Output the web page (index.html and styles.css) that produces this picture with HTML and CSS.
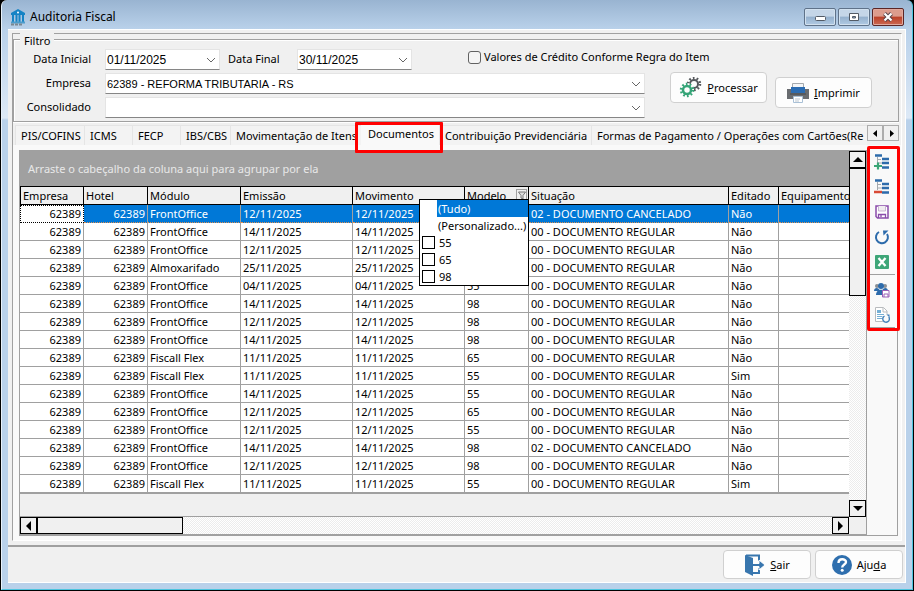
FILE: index.html
```html
<!DOCTYPE html>
<html lang="pt-BR">
<head>
    <meta charset="UTF-8">
    <meta name="viewport" content="width=device-width, initial-scale=1.0">
    <title>Auditoria Fiscal</title>
    <link rel="stylesheet" href="styles.css">
</head>
<body>
    <div class="window">
        <header class="titlebar">
            <svg class="app-icon" width="16" height="17" viewBox="0 0 16 17">
                <path d="M8 0L15 4v2H1V4z" fill="#1583c5"/>
                <path d="M3 6v7M6.500 6v7M9.500 6v7M13 6v7" stroke="#1583c5" stroke-width="2"/>
                <circle cx="8" cy="3.500" r="1" fill="#fff"/>
                <path d="M1 12.500h14v2H1z" fill="#4d9ccb"/>
                <path d="M1 15.500h12" stroke="#7b8791" stroke-width="2" stroke-dasharray="3 1"/>
            </svg>
            <h1>Auditoria Fiscal</h1>
            <div class="window-buttons">
                <button class="win-btn" aria-label="Minimizar">
                    <svg width="12" height="12" viewBox="0 0 12 12"><rect x="1.500" y="5.500" width="10" height="4" rx="1" fill="#fff" stroke="#535b66"/></svg>
                </button>
                <button class="win-btn" aria-label="Maximizar">
                    <svg width="12" height="12" viewBox="0 0 12 12"><path d="M1.500 2.500h9v7h-9z" fill="#fff" stroke="#535b66"/><path d="M4.500 5.500h3v1.500h-3z" fill="#8fb0d2" stroke="#535b66"/></svg>
                </button>
                <button class="win-btn close" aria-label="Fechar">
                    <svg width="12" height="12" viewBox="0 0 12 12"><path d="M2.500 2.500l7 7M9.500 2.500l-7 7" stroke="#54434a" stroke-width="4"/><path d="M2.500 2.500l7 7M9.500 2.500l-7 7" stroke="#fff" stroke-width="2.200"/></svg>
                </button>
            </div>
        </header>

        <main class="client">
            <div class="panel">
                <fieldset class="filter">
                    <legend>Filtro</legend>
                    <div class="fields">
                        <label for="data-inicial">Data Inicial</label>
                        <div class="dates">
                            <select id="data-inicial" class="combo date"><option>01/11/2025</option></select>
                            <label for="data-final">Data Final</label>
                            <select id="data-final" class="combo date"><option>30/11/2025</option></select>
                            <label class="check"><input type="checkbox"> Valores de Crédito Conforme Regra do Item</label>
                        </div>
                        <label for="empresa">Empresa</label>
                        <select id="empresa" class="combo"><option>62389 - REFORMA TRIBUTARIA - RS</option></select>
                        <label for="consolidado">Consolidado</label>
                        <select id="consolidado" class="combo"><option></option></select>
                    </div>
                    <div class="actions">
                        <button class="btn">
                            <svg width="23" height="22" viewBox="0 0 23 22">
                                <g fill="none">
                                    <circle cx="15" cy="7" r="4" stroke="#55585c" stroke-width="2"/>
                                    <circle cx="15" cy="7" r="6" stroke="#55585c" stroke-width="2.500" stroke-dasharray="1.700 2.070"/>
                                    <circle cx="8" cy="13" r="7" fill="#fdfdfd"/>
                                    <circle cx="8" cy="13" r="4" stroke="#35a477" stroke-width="2.500"/>
                                    <circle cx="8" cy="13" r="6" stroke="#35a477" stroke-width="2.500" stroke-dasharray="1.700 2.070"/>
                                </g>
                            </svg>
                            <span><u>P</u>rocessar</span>
                        </button>
                        <button class="btn lower">
                            <svg width="22" height="20" viewBox="0 0 22 20">
                                <path d="M5.500.500h11v6h-11z" fill="#f4f6f8" stroke="#a5a9ad"/>
                                <path d="M0 6h4v4h14V6h4v10H0z" fill="#696c70"/>
                                <path d="M4 4h14v6H4z" fill="#2b6cb2"/>
                                <path d="M3 11h16" stroke="#45484c"/>
                                <path d="M6.500 13.500h9v6h-9z" fill="#fff" stroke="#a9c0d6"/>
                                <path d="M8 16h5M8 18h4" stroke="#bbc6d0"/>
                            </svg>
                            <span><u>I</u>mprimir</span>
                        </button>
                    </div>
                </fieldset>

                <nav class="tabs">
                    <button class="tab">PIS/COFINS</button>
                    <button class="tab">ICMS</button>
                    <button class="tab">FECP</button>
                    <button class="tab">IBS/CBS</button>
                    <button class="tab">Movimentação de Itens</button>
                    <button class="tab active">Documentos</button>
                    <button class="tab">Contribuição Previdenciária</button>
                    <button class="tab">Formas de Pagamento / Operações com Cartões</button>
                    <button class="tab last">(Re</button>
                    <div class="tab-arrows">
                        <button aria-label="Abas anteriores"><svg width="5" height="7" viewBox="0 0 5 7"><path d="M4 0v7L0 3.500z"/></svg></button>
                        <button aria-label="Próximas abas"><svg width="5" height="7" viewBox="0 0 5 7"><path d="M1 0v7l4-3.500z"/></svg></button>
                    </div>
                </nav>

                <section class="page">
                    <div class="grid-box">
                        <div class="grid-main">
                            <div class="group-bar">Arraste o cabeçalho da coluna aqui para agrupar por ela</div>
                            <table class="grid">
                                <colgroup>
                                    <col class="c-empresa"><col class="c-hotel"><col class="c-modulo"><col class="c-data"><col class="c-data"><col class="c-hotel"><col class="c-situacao"><col class="c-editado"><col>
                                </colgroup>
                                <thead>
                                    <tr>
                                        <th>Empresa</th><th>Hotel</th><th>Módulo</th><th>Emissão</th><th>Movimento</th>
                                        <th class="filtered">Modelo
                                            <button class="filter-btn" aria-label="Filtrar modelo"><svg width="8" height="8" viewBox="0 0 8 8"><path d="M.500 1h7L5 4.500V8L3 7V4.500z" fill="#ddd" stroke="#777"/></svg></button>
                                            <div class="filter-menu">
                                                <button class="item selected">(Tudo)</button>
                                                <button class="item">(Personalizado...)</button>
                                                <label class="item"><input type="checkbox">55</label>
                                                <label class="item"><input type="checkbox">65</label>
                                                <label class="item"><input type="checkbox">98</label>
                                            </div>
                                        </th>
                                        <th>Situação</th><th>Editado</th><th>Equipamento</th>
                                    </tr>
                                </thead>
                                <tbody>
                                    <tr class="current"><td>62389</td><td>62389</td><td>FrontOffice</td><td>12/11/2025</td><td>12/11/2025</td><td></td><td>02 - DOCUMENTO CANCELADO</td><td>Não</td><td></td></tr>
                                    <tr><td>62389</td><td>62389</td><td>FrontOffice</td><td>14/11/2025</td><td>14/11/2025</td><td></td><td>00 - DOCUMENTO REGULAR</td><td>Não</td><td></td></tr>
                                    <tr><td>62389</td><td>62389</td><td>FrontOffice</td><td>12/11/2025</td><td>12/11/2025</td><td></td><td>00 - DOCUMENTO REGULAR</td><td>Não</td><td></td></tr>
                                    <tr><td>62389</td><td>62389</td><td>Almoxarifado</td><td>25/11/2025</td><td>25/11/2025</td><td></td><td>00 - DOCUMENTO REGULAR</td><td>Não</td><td></td></tr>
                                    <tr><td>62389</td><td>62389</td><td>FrontOffice</td><td>04/11/2025</td><td>04/11/2025</td><td>55</td><td>00 - DOCUMENTO REGULAR</td><td>Não</td><td></td></tr>
                                    <tr><td>62389</td><td>62389</td><td>FrontOffice</td><td>14/11/2025</td><td>14/11/2025</td><td>98</td><td>00 - DOCUMENTO REGULAR</td><td>Não</td><td></td></tr>
                                    <tr><td>62389</td><td>62389</td><td>FrontOffice</td><td>12/11/2025</td><td>12/11/2025</td><td>98</td><td>00 - DOCUMENTO REGULAR</td><td>Não</td><td></td></tr>
                                    <tr><td>62389</td><td>62389</td><td>FrontOffice</td><td>14/11/2025</td><td>14/11/2025</td><td>98</td><td>00 - DOCUMENTO REGULAR</td><td>Não</td><td></td></tr>
                                    <tr><td>62389</td><td>62389</td><td>Fiscall Flex</td><td>11/11/2025</td><td>11/11/2025</td><td>65</td><td>00 - DOCUMENTO REGULAR</td><td>Não</td><td></td></tr>
                                    <tr><td>62389</td><td>62389</td><td>Fiscall Flex</td><td>11/11/2025</td><td>11/11/2025</td><td>55</td><td>00 - DOCUMENTO REGULAR</td><td>Sim</td><td></td></tr>
                                    <tr><td>62389</td><td>62389</td><td>FrontOffice</td><td>14/11/2025</td><td>14/11/2025</td><td>55</td><td>00 - DOCUMENTO REGULAR</td><td>Não</td><td></td></tr>
                                    <tr><td>62389</td><td>62389</td><td>FrontOffice</td><td>12/11/2025</td><td>12/11/2025</td><td>65</td><td>00 - DOCUMENTO REGULAR</td><td>Não</td><td></td></tr>
                                    <tr><td>62389</td><td>62389</td><td>FrontOffice</td><td>12/11/2025</td><td>12/11/2025</td><td>55</td><td>00 - DOCUMENTO REGULAR</td><td>Não</td><td></td></tr>
                                    <tr><td>62389</td><td>62389</td><td>FrontOffice</td><td>14/11/2025</td><td>14/11/2025</td><td>98</td><td>02 - DOCUMENTO CANCELADO</td><td>Não</td><td></td></tr>
                                    <tr><td>62389</td><td>62389</td><td>FrontOffice</td><td>12/11/2025</td><td>12/11/2025</td><td>98</td><td>00 - DOCUMENTO REGULAR</td><td>Não</td><td></td></tr>
                                    <tr><td>62389</td><td>62389</td><td>Fiscall Flex</td><td>11/11/2025</td><td>11/11/2025</td><td>55</td><td>00 - DOCUMENTO REGULAR</td><td>Sim</td><td></td></tr>
                                </tbody>
                            </table>
                        </div>
                        <div class="scroll vertical">
                            <button aria-label="Rolar para cima"><svg width="10" height="5" viewBox="0 0 10 5"><path d="M0 5h10L5 0z"/></svg></button>
                            <div class="thumb"></div>
                            <button class="end" aria-label="Rolar para baixo"><svg width="10" height="5" viewBox="0 0 10 5"><path d="M0 0h10L5 5z"/></svg></button>
                        </div>
                        <div class="scroll horizontal">
                            <button aria-label="Rolar para a esquerda"><svg width="5" height="10" viewBox="0 0 5 10"><path d="M5 0v10L0 5z"/></svg></button>
                            <div class="thumb"></div>
                            <button class="end" aria-label="Rolar para a direita"><svg width="5" height="10" viewBox="0 0 5 10"><path d="M0 0v10l5-5z"/></svg></button>
                        </div>
                    </div>

                    <aside class="toolbar">
                        <div class="tools">
                            <button aria-label="Expandir">
                                <svg width="16" height="16" viewBox="0 0 16 16"><path d="M1 1.500h7M8 5h7M8 9h7M8 13.500h7" stroke="#2d6bab" stroke-width="2.500"/><path d="M3.500 3v7M4 5.500h3M4 9h4" stroke="#a3a8ad" fill="none"/><path d="M0 12h8M4 8.500v7" stroke="#3aa676" stroke-width="2.200"/></svg>
                            </button>
                            <button aria-label="Recolher">
                                <svg width="16" height="16" viewBox="0 0 16 16"><path d="M1 1.500h7M8 5h7M8 9h7M8 13.500h7" stroke="#2d6bab" stroke-width="2.500"/><path d="M3.500 3v8M4 5.500h3M4 9h4" stroke="#a3a8ad" fill="none"/><path d="M0 13h8" stroke="#d84a36" stroke-width="2.500"/></svg>
                            </button>
                            <button aria-label="Salvar">
                                <svg width="16" height="16" viewBox="0 0 16 16"><path d="M2 2h12v12H3.500L2 12.500z" fill="#fff" stroke="#8a4cab" stroke-width="1.500"/><path d="M4.500 2v5h7V2" fill="#f0edf0" stroke="#c9b5d3"/><path d="M4.500 14v-3.500h7V14M7 11v2" fill="none" stroke="#8a4cab" stroke-width="1.300"/></svg>
                            </button>
                            <button aria-label="Atualizar">
                                <svg width="16" height="16" viewBox="0 0 16 16"><path d="M5 3A6 6 0 1 0 13 5" fill="none" stroke="#2d6bab" stroke-width="2"/><path d="M9 1.500h5.500L9.500 6.500z" fill="#2d6bab"/></svg>
                            </button>
                            <button aria-label="Exportar para Excel">
                                <svg width="16" height="16" viewBox="0 0 16 16"><rect x="1" y="1" width="14" height="14" rx="1" fill="#3ea678"/><path d="M4.500 4l7 8M11.500 4l-7 8" stroke="#fff" stroke-width="2.300"/></svg>
                            </button>
                            <hr>
                            <button aria-label="Salvar participantes">
                                <svg width="16" height="16" viewBox="0 0 16 16"><circle cx="3" cy="4" r="2" fill="#8a8f95"/><circle cx="11" cy="4" r="2" fill="#8a8f95"/><path d="M0 9c0-4 5-4 6 0zM8 9c1-4 6-4 6 0z" fill="#2d6bab"/><circle cx="7" cy="4" r="3" fill="#2d6bab"/><path d="M2 13c0-7 10-7 10 0z" fill="#2d6bab"/><path d="M8.500 8.500h6.500v6.500H8.500z" fill="#fff" stroke="#9b60b8"/><path d="M10 15v-3h4v3" fill="none" stroke="#9b60b8"/></svg>
                            </button>
                            <button aria-label="Atualizar documento">
                                <svg width="16" height="16" viewBox="0 0 16 16"><path d="M1.500.500h8L13 4v10.500H1.500z" fill="#fff" stroke="#b8bbbe"/><path d="M9 1v4h4" fill="none" stroke="#b8bbbe"/><path d="M3 3h4v3H3z" fill="#75afd5"/><path d="M3 7.500h7M3 9.500h6M3 11.500h5" stroke="#75afd5"/><circle cx="12" cy="11.500" r="4" fill="#fafafa"/><path d="M10.500 9A3.300 3.300 0 1 0 14.800 10" fill="none" stroke="#4380b9" stroke-width="1.400"/><path d="M12.500 7.500h3v3z" fill="#4380b9"/></svg>
                            </button>
                            <hr>
                        </div>
                    </aside>
                </section>
            </div>

            <footer class="footer">
                <button class="btn">
                    <svg width="21" height="22" viewBox="0 0 21 22"><path d="M2 1.500h13V7M15 14v5H9" fill="none" stroke="#3876ae" stroke-width="2"/><path d="M8 9.500h7V6l6 5-6 5v-3.500H8z" fill="#3876ae" stroke="#fdfdfd"/><path d="M1 1l8 3v18l-8-4z" fill="#3876ae"/></svg>
                    <span><u>S</u>air</span>
                </button>
                <button class="btn">
                    <svg width="20" height="20" viewBox="0 0 20 20"><circle cx="10" cy="10" r="10" fill="#2f6fae"/><path d="M6.500 8c0-5 7.500-4.500 7.500-1 0 2.500-3.800 2.500-3.800 5.500" fill="none" stroke="#fff" stroke-width="2.400"/><circle cx="10.200" cy="15.300" r="1.500" fill="#fff"/></svg>
                    <span>Aju<u>d</u>a</span>
                </button>
            </footer>
        </main>
    </div>
</body>
</html>
```
FILE: styles.css
```css
* {
    margin: 0;
    padding: 0;
    box-sizing: border-box;
}

body {
    font-family: 'Noto Sans', 'Open Sans', sans-serif;
    font-size: 11px;
    line-height: 16px;
    color: #000;
    background: #000;
    min-height: 100vh;
    display: flex;
}

button, input, select {
    font: inherit;
    color: inherit;
}

/* window frame */
.window {
    flex: 1;
    min-width: 0;
    display: flex;
    flex-direction: column;
    margin: 0 1px 1px;
    padding: 0 6px 6px;
    border: 1px solid #4cc4de;
    border-width: 0 1px 1px;
    border-left-color: #e8f1fa;
    border-radius: 6px 6px 0 0;
    background: linear-gradient(#99b4d1 0, #b9d1ea 29px, #dde9f6 118px, #b9d1ea 120px);
}

.titlebar {
    display: flex;
    align-items: center;
    height: 29px;
    padding: 5px 2px 0;
    gap: 4px;
}

.titlebar h1 {
    flex: 1;
    font-size: 12px;
    font-weight: normal;
}

.window-buttons {
    display: flex;
    gap: 2px;
}

.win-btn {
    display: flex;
    align-items: center;
    justify-content: center;
    width: 32px;
    height: 18px;
    border: 1px solid #5f7289;
    border-radius: 2px;
    background: linear-gradient(#c5d6e8 45%, #94b0cd 50%, #b0cae3);
    box-shadow: inset 0 0 0 1px #d2e1ef;
}

.win-btn.close {
    border-color: #5b2626;
    background: linear-gradient(#dc9c8d 45%, #bb4028 50%, #cb6953);
    box-shadow: inset 0 0 0 1px #e0a99e;
}

.client {
    flex: 1;
    display: flex;
    flex-direction: column;
    background: #f0f0f0;
    border: 1px solid #fff;
    border-left-width: 0;
}

.panel {
    flex: 1;
    display: flex;
    flex-direction: column;
    margin: 3px 3px 4px 4px;
    border: 1px solid #a0a0a0;
    border-right-color: #fff;
    border-bottom-color: #fff;
}

/* filter */
.filter {
    position: relative;
    display: flex;
    min-width: 0;
    margin: 5px 2px 2px 0;
    padding: 9px 26px 3px 0;
    border: 1px solid #a0a0a0;
    box-shadow: inset 1px 1px #fff, 0 1px #fff;
}

.filter legend {
    position: absolute;
    top: -7px;
    left: 6px;
    padding: 0 4px;
    background: #f0f0f0;
}

.fields {
    flex: 1;
    min-width: 0;
    display: grid;
    grid-template-columns: 77px minmax(0, 1fr);
    gap: 3px 14px;
}

.fields > label {
    text-align: right;
    line-height: 20px;
}

.dates {
    display: flex;
    align-items: flex-start;
    gap: 8px;
    white-space: nowrap;
    line-height: 20px;
}

.dates label {
    min-width: 61px;
}

.combo {
    width: 100%;
    height: 21px;
    padding: 0 1px;
    border: 1px solid #e4e4e4;
    border-bottom-color: #868686;
    border-radius: 0;
    appearance: none;
    font: 11px 'Liberation Sans', Arial, sans-serif;
    background: #fff url("data:image/svg+xml,%3Csvg xmlns='http://www.w3.org/2000/svg' width='10' height='6'%3E%3Cpath d='M1 1l4 4 4-4' fill='none' stroke='%23666'/%3E%3C/svg%3E") no-repeat right 3px center;
}

.combo.date {
    flex: none;
    width: 115px;
    font-size: 12px;
}

.check {
    flex: none;
    display: flex;
    align-items: center;
    gap: 3px;
    margin-left: 48px;
    line-height: 16px;
}

.check input {
    flex: none;
    appearance: none;
    width: 13px;
    height: 13px;
    border: 1px solid #626262;
    border-radius: 3px;
    background: #f5f5f5;
}

.actions {
    flex: none;
    display: flex;
    align-items: flex-start;
    gap: 8px;
    padding: 23px 0 0 25px;
}

.btn {
    display: flex;
    align-items: center;
    justify-content: center;
    gap: 5px;
    width: 97px;
    height: 31px;
    border: 1px solid #d0d0d0;
    border-radius: 4px;
    background: #fdfdfd;
}

.btn.lower {
    margin-top: 5px;
}

/* tabs */
.tabs {
    display: grid;
    grid-template-columns: 69px 48px 48px 50px 131px 78px 152px 256px minmax(0, 1fr) 32px;
    height: 21px;
    padding: 1px 0 0 2px;
    margin-right: 2px;
}

.tab {
    overflow: hidden;
    padding: 0 0 0 5px;
    border: 1px solid #e5e5e5;
    border-width: 1px 0 0 1px;
    background: #f3f3f3;
    text-align: left;
    white-space: nowrap;
}

.tab.active {
    position: relative;
    overflow: visible;
    padding: 0 0 3px 6px;
    border-color: transparent;
    background: #f9f9f9;
}

.tab.active::after {
    content: '';
    position: absolute;
    inset: -4px -4px -8px -7px;
    border: 3px solid #f00;
    border-radius: 1px;
    z-index: 2;
}

.tab.last {
    padding-left: 0;
    border-left: 0;
}

.tab-arrows {
    display: flex;
    height: 16px;
}

.tab-arrows button {
    flex: 1;
    display: flex;
    align-items: center;
    justify-content: center;
    border: 1px solid #adadad;
    background: #f0f0f0;
}

.page {
    flex: 1;
    display: flex;
    padding: 5px 3px 4px 6px;
    background: #f9f9f9;
}

/* data grid */
.grid-box {
    flex: 1;
    min-width: 0;
    display: grid;
    grid-template-columns: minmax(0, 1fr) 17px;
    grid-template-rows: 1fr 17px;
    border: solid #a0a0a0;
    border-width: 1px 1px 2px;
    background: #f0f0f0;
}

.grid-main {
    overflow: hidden;
    border-bottom: 1px solid #a0a0a0;
}

.group-bar {
    height: 35px;
    padding: 10px 8px;
    background: #a0a0a0;
    color: #e8e8e8;
}

.grid {
    width: 100%;
    table-layout: fixed;
    border-collapse: separate;
    border-spacing: 0;
    border-bottom: 1px solid #a0a0a0;
}

.c-empresa {
    width: 64px;
}

.c-hotel {
    width: 64px;
}

.c-modulo {
    width: 93px;
}

.c-data {
    width: 112px;
}

.c-situacao {
    width: 200px;
}

.c-editado {
    width: 50px;
}

.grid th,
.grid td {
    height: 18px;
    padding: 0 2px;
    font-weight: normal;
    text-align: left;
    white-space: nowrap;
    line-height: 16px;
}

.grid th {
    height: 19px;
    background: #f0f0f0;
    border: 1px solid #000;
    border-left-width: 0;
}

.grid th:first-child {
    border-left-width: 1px;
}

.grid td {
    background: #fff;
    border-right: 1px solid #a0a0a0;
    border-bottom: 1px solid #a0a0a0;
}

.grid th:last-child,
.grid td:last-child {
    border-right: 0;
}

.grid td:nth-child(-n+2) {
    text-align: right;
}

.grid .current td {
    background: #0078d7;
    color: #fff;
    border-bottom: 1px dotted #e09050;
}

.grid .current td:first-child {
    background: #fff;
    color: #000;
    border: 1px dotted #000;
}

.filtered {
    position: relative;
}

.filter-btn {
    position: absolute;
    top: 2px;
    right: 1px;
    display: flex;
    align-items: center;
    justify-content: center;
    width: 11px;
    height: 11px;
    border: 1px solid #a0a0a0;
    background: #f0f0f0;
}

.filter-menu {
    position: absolute;
    top: 12px;
    right: -1px;
    z-index: 1;
    width: 110px;
    border: 1px solid #000;
    background: #fff;
}

.item {
    display: flex;
    align-items: center;
    width: 100%;
    height: 17px;
    border: 0;
    background: #fff;
}

.item.selected {
    background: linear-gradient(90deg, #fff 17px, #0078d7 17px);
    color: #fff;
}

button.item {
    padding-left: 18px;
}

label.item {
    gap: 4px;
    padding-left: 2px;
}

.item input {
    appearance: none;
    width: 13px;
    height: 13px;
    border: 1px solid #000;
    background: #fff;
}

/* scrollbars */
.scroll {
    display: flex;
    background: repeating-conic-gradient(#fff 0 25%, #ececec 0 50%) 0 0 / 2px 2px;
}

.scroll.vertical {
    flex-direction: column;
}

.scroll button {
    display: flex;
    align-items: center;
    justify-content: center;
    width: 17px;
    height: 17px;
    border: 1px solid #000;
    background: #f0f0f0;
}

.scroll .end {
    margin-top: auto;
}

.scroll.horizontal .end {
    margin: 0 0 0 auto;
}

.thumb {
    border: 1px solid #000;
    background: #f0f0f0;
}

.vertical .thumb {
    height: 35%;
}

.horizontal .thumb {
    width: 146px;
}

/* side toolbar */
.toolbar {
    width: 31px;
    border: 1px solid #a0a0a0;
    border-width: 0 1px 1px 0;
}

.tools {
    display: flex;
    flex-direction: column;
    align-items: center;
    margin: -4px -3px 0 0;
    padding: 0 3px 0 0;
    border: 3px solid #f00;
    border-radius: 2px;
}

.tools button {
    display: flex;
    align-items: center;
    justify-content: center;
    width: 24px;
    height: 25px;
    border: 0;
    background: none;
}

.tools hr {
    width: 25px;
    margin-bottom: 2px;
    border: 0;
    border-top: 1px solid #a0a0a0;
}

.tools hr:last-child {
    margin-bottom: 0;
}

/* footer */
.footer {
    display: flex;
    justify-content: flex-end;
    gap: 4px;
    padding: 3px 2px 3px;
    border-top: 2px solid #a0a0a0;
}

.footer .btn {
    width: 88px;
    height: 29px;
}
```
